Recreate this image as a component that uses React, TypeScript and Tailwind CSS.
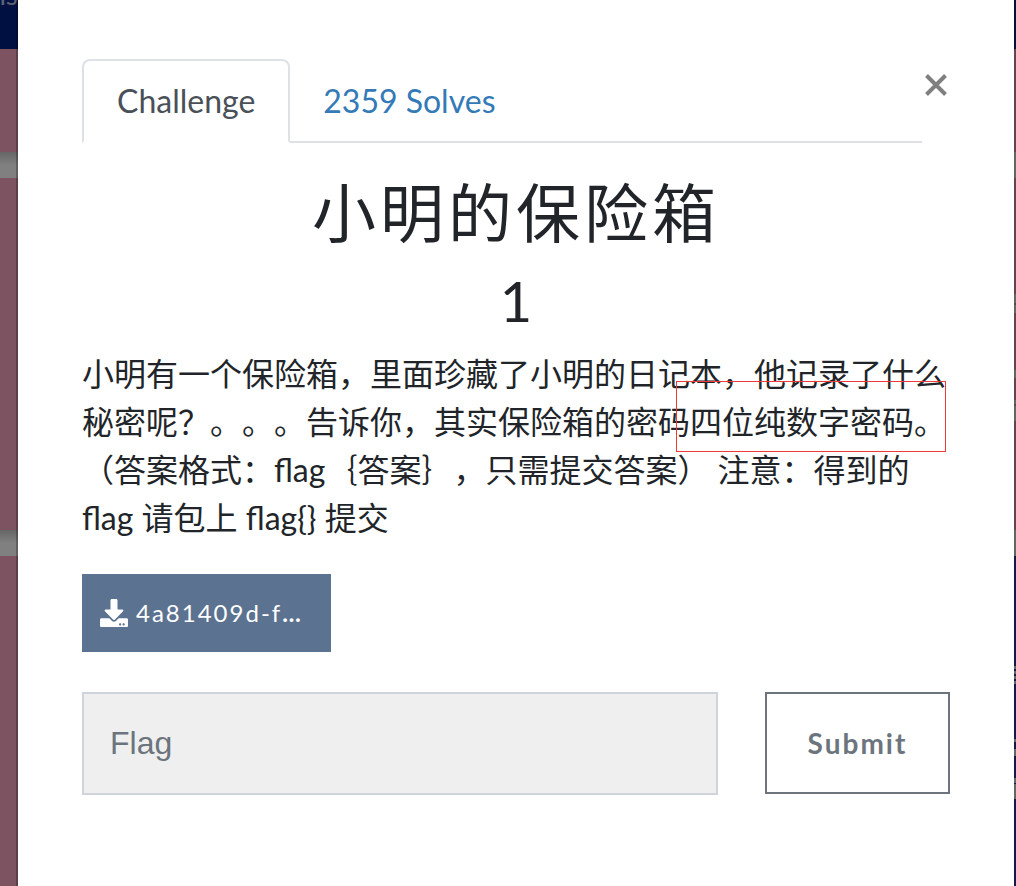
import { FaDownload } from "react-icons/fa";

const description =
  "小明有一个保险箱，里面珍藏了小明的日记本，他记录了什么秘密呢？。。。告诉你，其实保险箱的密码四位纯数字密码。（答案格式：flag｛答案｝，只需提交答案） 注意：得到的 flag 请包上 flag{} 提交";

const ROSE = "#654351";
const GREY = "#646664";
const NAVY = "#15194a";

/* Visible edge of the challenge cards behind the dialog: [height, colour]. */
const edge: [number, string][] = [
  [49, "#001137"],
  [103, ROSE],
  [26, GREY],
  [116, ROSE],
  [9, GREY],
  [2, ROSE],
  [8, GREY],
  [57, ROSE],
  [8, GREY],
  [22, ROSE],
  [4, GREY],
  [2, ROSE],
  [15, GREY],
  [109, ROSE],
  [26, GREY],
  [110, NAVY],
  [3, GREY],
  [2, NAVY],
  [3, GREY],
  [2, NAVY],
  [3, GREY],
  [2, NAVY],
  [3, GREY],
  [55, NAVY],
  [3, GREY],
  [7, NAVY],
  [7, GREY],
  [22, NAVY],
  [5, GREY],
  [1, NAVY],
  [15, GREY],
];

function Backdrop() {
  return (
    <div aria-hidden="true" className="absolute inset-0 flex justify-between overflow-hidden">
      <div className="relative flex w-[18px] flex-col bg-[#7e5361]">
        <div className="h-[49px] shrink-0 bg-[#001141]">
          <span className="-mt-5 flex justify-end text-[28px] leading-7 text-[#5d6373]">ns</span>
        </div>
        <div className="h-[103px] shrink-0" />
        <div className="h-[26px] shrink-0 bg-linear-to-b from-[#666] to-[#808080] to-50%" />
        <div className="h-[352px] shrink-0" />
        <div className="h-[26px] shrink-0 bg-linear-to-b from-[#666] to-[#808080] to-50%" />
        <div className="absolute inset-y-0 right-0 w-[2px] bg-black/25" />
      </div>
      <div className="flex w-[2px] flex-col bg-[#15194a]">
        {edge.map(([height, background], i) => (
          <div key={i} className="shrink-0" style={{ height, background }} />
        ))}
      </div>
    </div>
  );
}

export default function App() {
  return (
    <div className="relative flex min-h-screen font-['Lato','Noto_Sans_CJK_SC',sans-serif] text-[#212529]">
      <Backdrop />
      <main role="dialog" aria-labelledby="title" className="relative mr-[2px] ml-[18px] flex-1 bg-white px-16 pt-[59px] pb-20">
        <div className="flex items-start">
          <div role="tablist" className="flex flex-1 border-b-2 border-[#dee2e6] text-[32px] leading-[48px]">
            <button role="tab" aria-selected="true" className="-mb-[2px] rounded-t-lg border-2 border-[#dee2e6] border-b-white bg-white px-[33px] py-4 text-[#495057]">
              Challenge
            </button>
            <button role="tab" aria-selected="false" className="px-[33px] pt-[18px] pb-4 text-[#337ab7]">
              2359 Solves
            </button>
          </div>
          <button aria-label="Close" className="flex h-[52px] w-7 items-center justify-center text-[#808080]">
            <svg viewBox="0 0 22 22" className="size-[22px]" fill="none" stroke="currentColor" strokeWidth="4">
              <path d="M1.5 1.5 20.5 20.5M20.5 1.5 1.5 20.5" />
            </svg>
          </button>
        </div>

        <h2 id="title" className="mt-[31px] text-center text-[64px] leading-[77px] tracking-[4px]">小明的保险箱</h2>
        <h3 className="mt-4 text-center text-[56px] leading-[67px]">1</h3>

        <div className="relative mt-4">
          <p className="text-[32px] leading-[48px] [text-spacing-trim:space-all]">{description}</p>
          <div className="absolute top-[31px] right-1 h-[71px] w-[270px] border border-[#f03a3a]" />
        </div>

        <a href="#download" className="mt-8 flex h-[78px] w-[249px] items-center gap-2 bg-[#5b7290] px-[18px] text-[24px] tracking-[2px] whitespace-nowrap text-white">
          <FaDownload className="size-7 shrink-0" />
          <span>4a81409d-f<b>…</b></span>
        </a>

        <form className="mt-10 flex gap-[47px]" onSubmit={(e) => e.preventDefault()}>
          <input
            aria-label="Flag"
            placeholder="Flag"
            className="h-[103px] min-w-0 flex-1 border-2 border-[#ced4da] bg-[#efefef] px-[26px] font-['Liberation_Sans',sans-serif] text-[32px] placeholder:text-[#6c757d]"
          />
          <button type="submit" className="h-[102px] w-[185px] border-2 border-[#6c757d] text-[28px] font-bold tracking-[2px] text-[#6c757d]">
            Submit
          </button>
        </form>
      </main>
    </div>
  );
}
